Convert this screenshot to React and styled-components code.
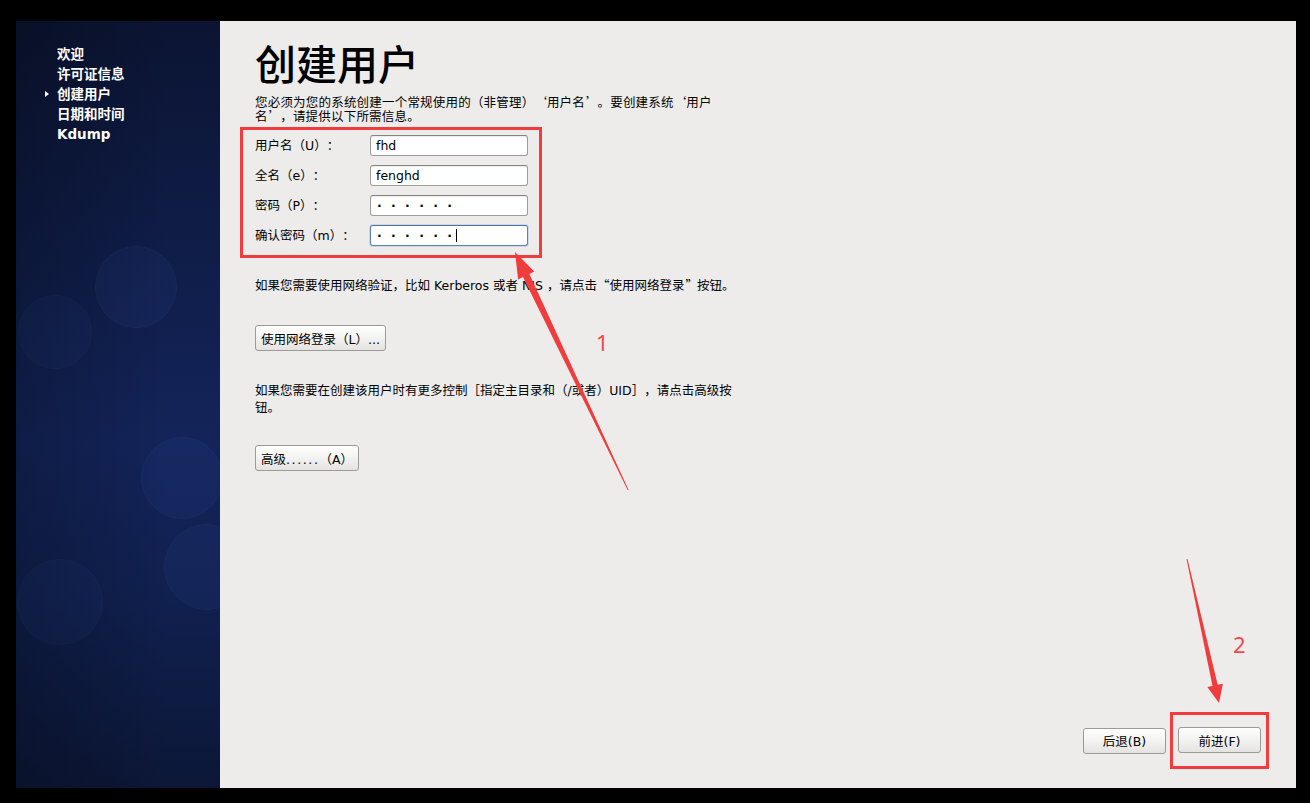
import React from "react";
import styled, { createGlobalStyle } from "styled-components";

const GlobalStyle = createGlobalStyle`
  html, body {
    margin: 0;
    padding: 0;
    background: #000;
  }
  body {
    font-family: "DejaVu Sans", "Noto Sans CJK SC", sans-serif;
    text-spacing-trim: space-all;
  }
`;

const cjk = `"Noto Sans CJK SC", "DejaVu Sans", sans-serif`;
const red = "#f03c3c";

const Screen = styled.div`
  position: relative;
  width: 1310px;
  height: 803px;
  box-sizing: border-box;
  padding: 21px 14px 15px 16px;
  display: grid;
  grid-template-columns: 204px 1fr;
  background: #000;
  overflow: hidden;
`;

const Sidebar = styled.nav`
  padding: 23px 0 0 29px;
  background:
    radial-gradient(circle 41px at 120px 266px, rgba(60, 95, 190, 0.08) 96%, rgba(80, 115, 200, 0.1) 99%, transparent 100%),
    radial-gradient(circle 37px at 39px 311px, rgba(60, 95, 190, 0.05) 96%, rgba(80, 115, 200, 0.07) 99%, transparent 100%),
    radial-gradient(circle 41px at 166px 457px, rgba(60, 95, 190, 0.08) 96%, rgba(80, 115, 200, 0.1) 99%, transparent 100%),
    radial-gradient(circle 43px at 191px 546px, rgba(60, 95, 190, 0.08) 96%, rgba(80, 115, 200, 0.1) 99%, transparent 100%),
    radial-gradient(circle 43px at 44px 581px, rgba(60, 95, 190, 0.05) 96%, rgba(80, 115, 200, 0.07) 99%, transparent 100%),
    linear-gradient(90deg, rgba(0, 0, 0, 0.22), rgba(0, 0, 0, 0) 75%),
    linear-gradient(180deg, #0b1432 0%, #0f1d48 30%, #13245a 55%, #10204f 75%, #0c1737 100%);
`;

const NavItem = styled.div`
  display: grid;
  grid-template-columns: 12px auto;
  align-items: center;
  height: 20px;
  color: #fff;
  font-family: "DejaVu Sans", "Noto Sans CJK SC", sans-serif;
  font-weight: bold;
  font-size: 13.5px;
  line-height: 20px;
`;

const Marker = styled.span`
  width: 0;
  height: 0;
  border-left: 4px solid ${p => (p.$on ? "#fff" : "transparent")};
  border-top: 3px solid transparent;
  border-bottom: 3px solid transparent;
`;

const Main = styled.main`
  display: flex;
  flex-direction: column;
  align-items: flex-start;
  padding: 21px 27px 19px 35px;
  background: #edeceb;
  color: #000;
  font-size: 12.5px;
`;

const Title = styled.h1`
  margin: 0;
  font-family: ${cjk};
  font-weight: 500;
  font-size: 41px;
  line-height: 41px;
`;

const Intro = styled.p`
  margin: 13px 0 0;
  width: 490px;
  line-height: 13.5px;
  letter-spacing: 0.2px;
`;

// quote marks take a full CJK cell, glyph pushed to the word side
const Q = styled.span`
  display: inline-block;
  width: 1em;
  height: 1em;
  line-height: 1em;
  font-family: ${cjk};
  text-align: ${p => (p.$open ? "right" : "left")};
  padding: ${p => (p.$open ? "0 1px 0 0" : "0 0 0 1px")};
  box-sizing: border-box;
`;

const FormBox = styled.div`
  margin: 4px 0 0 -15px;
  width: 302px;
  box-sizing: border-box;
  border: 3px solid ${red};
  padding: 5px 0 9px 12px;
  display: grid;
  grid-template-columns: 115px 158px;
  row-gap: 9px;
  align-items: center;
`;

const Label = styled.label`
  line-height: 21px;
  white-space: nowrap;
`;

const Field = styled.div`
  height: 21px;
  box-sizing: border-box;
  display: flex;
  align-items: center;
  padding: 0 6px 0 5px;
  background: #fff;
  border: 1px solid ${p => (p.$focus ? "#5d82b6" : "#9d9d9b")};
  border-top-color: ${p => (p.$focus ? "#4d73aa" : "#85847f")};
  border-radius: 3px;
  box-shadow: ${p => (p.$focus ? "0 0 0 1px rgba(110,150,210,0.25)" : "inset 0 1px 1px rgba(0,0,0,0.08)")};
  white-space: nowrap;
`;

const Dots = styled.span`
  letter-spacing: 9.3px;
  font-weight: bold;
  padding-left: 1px;
`;

const Caret = styled.span`
  width: 1px;
  height: 13px;
  margin-left: -5px;
  background: #000;
`;

const Para = styled.p`
  margin: ${p => p.$top}px 0 0;
  width: 490px;
  line-height: ${p => p.$lh}px;
`;

const Button = styled.button`
  margin-top: ${p => p.$top || 0}px;
  height: 26px;
  min-width: ${p => p.$min || 0}px;
  box-sizing: border-box;
  padding: 0 5px;
  border: 1px solid #9b9a97;
  border-radius: 3px;
  background: linear-gradient(180deg, #fefefe 0%, #f4f4f3 45%, #e4e3e1 100%);
  box-shadow: inset 0 1px 0 #fff;
  font-family: "DejaVu Sans", "Noto Sans CJK SC", sans-serif;
  font-size: 12.5px;
  color: #000;
  white-space: nowrap;
  text-spacing-trim: space-all;
`;

const Spaced = styled.span`
  letter-spacing: 1.6px;
`;

const Footer = styled.div`
  margin-top: auto;
  align-self: flex-end;
  display: flex;
  align-items: center;
  gap: 4px;
`;

const Highlight = styled.div`
  border: 3px solid ${red};
  padding: 12px 5px 13px;
  display: flex;
`;

const Overlay = styled.svg`
  position: absolute;
  top: 0;
  left: 0;
  pointer-events: none;
`;

const Num = styled.span`
  position: absolute;
  left: ${p => p.$x}px;
  top: ${p => p.$y}px;
  font-family: "Noto Sans", "DejaVu Sans", sans-serif;
  font-size: 22px;
  line-height: 22px;
  color: #f0494a;
`;

const steps = ["欢迎", "许可证信息", "创建用户", "日期和时间", "Kdump"];

export default function App() {
  return (
    <>
      <GlobalStyle />
      <Screen>
        <Sidebar>
          {steps.map(s => (
            <NavItem key={s}>
              <Marker $on={s === "创建用户"} />
              <span>{s}</span>
            </NavItem>
          ))}
        </Sidebar>

        <Main>
          <Title>创建用户</Title>
          <Intro>
            您必须为您的系统创建一个常规使用的（非管理）<Q $open>‘</Q>用户名<Q>’</Q>。要创建系统<Q $open>‘</Q>用户
            <br />
            名<Q>’</Q>，请提供以下所需信息。
          </Intro>

          <FormBox>
            <Label>用户名（U）：</Label>
            <Field>fhd</Field>
            <Label>全名（e）：</Label>
            <Field>fenghd</Field>
            <Label>密码（P）：</Label>
            <Field><Dots>······</Dots></Field>
            <Label>确认密码（m）：</Label>
            <Field $focus><Dots>······</Dots><Caret /></Field>
          </FormBox>

          <Para $top={21} $lh={14}>
            如果您需要使用网络验证，比如 Kerberos 或者 NIS ，请点击<Q $open>“</Q>使用网络登录<Q>”</Q>按钮。
          </Para>
          <Button $top={32}>使用网络登录（L）...</Button>

          <Para $top={31} $lh={17}>
            如果您需要在创建该用户时有更多控制［指定主目录和（/或者）UID］，请点击高级按钮。
          </Para>
          <Button $top={29}>高级<Spaced>......</Spaced>（A）</Button>

          <Footer>
            <Button $min={83}>后退(B)</Button>
            <Highlight>
              <Button $min={83}>前进(F)</Button>
            </Highlight>
          </Footer>
        </Main>

        <Overlay width="1310" height="803" viewBox="0 0 1310 803">
          <polygon
            fill={red}
            points="515,252 534.3,271.6 529.4,274 628.6,490 627.6,490 523,277 518.1,279.4"
          />
          <polygon
            fill={red}
            points="1219,703 1222.9,683.7 1217.7,684.8 1187.5,559 1186.5,559 1212.5,686 1207.3,687.1"
          />
        </Overlay>
        <Num $x={596} $y={331}>1</Num>
        <Num $x={1233} $y={633}>2</Num>
      </Screen>
    </>
  );
}
